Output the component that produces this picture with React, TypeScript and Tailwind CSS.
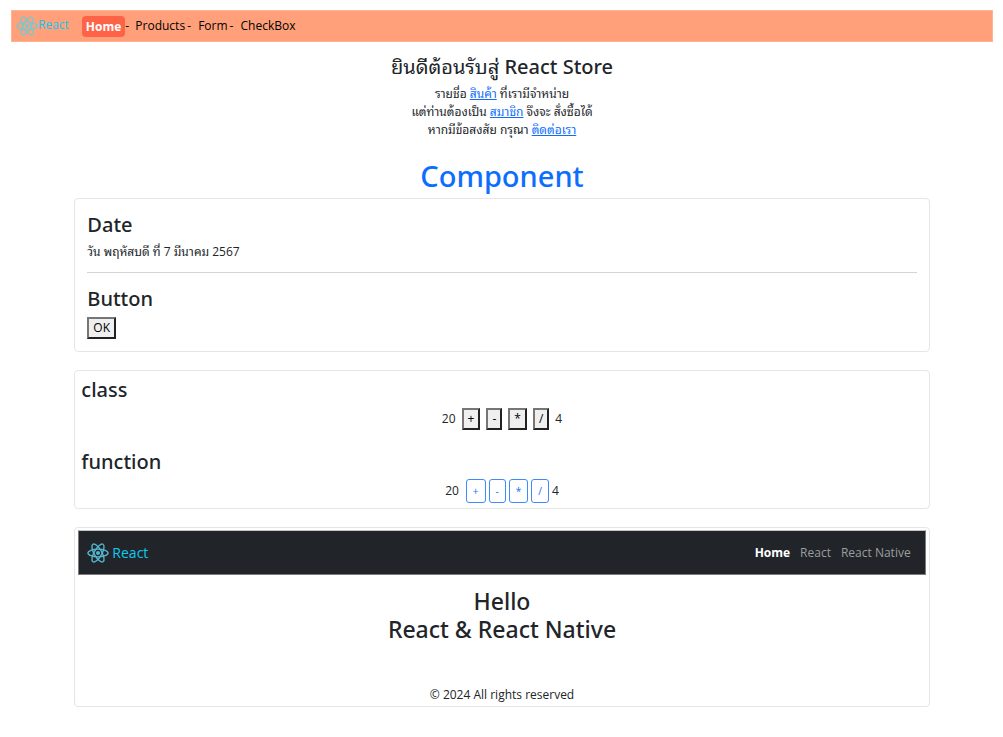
import React from "react";

function ReactLogo({ className }: { className: string }) {
  return (
    <svg viewBox="0 0 24 24" className={className} fill="none" stroke="currentColor" strokeWidth="1.5" aria-hidden="true">
      <circle cx="12" cy="12" r="2.2" fill="currentColor" stroke="none" />
      <ellipse cx="12" cy="12" rx="11" ry="4.2" />
      <ellipse cx="12" cy="12" rx="11" ry="4.2" transform="rotate(60 12 12)" />
      <ellipse cx="12" cy="12" rx="11" ry="4.2" transform="rotate(120 12 12)" />
    </svg>
  );
}

function TextLink({ children }: { children: React.ReactNode }) {
  return (
    <a href="#" className="text-[#0d6efd] underline">
      {children}
    </a>
  );
}

function TopNav() {
  return (
    <nav className="flex h-8 items-center border border-[#ffb38f] bg-[#ffa07a] pl-1">
      <a href="#" className="flex items-center text-[#0dcaf0]">
        <ReactLogo className="h-[22px] w-[22px] text-[#7fc6cc]" />
        <span className="pb-[2px]">React</span>
      </a>
      <div className="ml-[13px] flex items-center text-black">
        <a href="#" className="rounded bg-[#ff6347] px-1 leading-[21px] font-bold text-white">Home</a>
        <span className="mr-[6px] w-1">-</span>
        <a href="#">Products</a>
        <span className="mr-[7px] ml-[2px] w-1">-</span>
        <a href="#">Form</a>
        <span className="mr-[7px] ml-[2px] w-1">-</span>
        <a href="#">CheckBox</a>
      </div>
    </nav>
  );
}

function Heading({ children }: { children: React.ReactNode }) {
  return <h3 className="font-['Noto_Sans',sans-serif] text-[20px] leading-6 font-medium">{children}</h3>;
}

const operators = ["+", "-", "*", "/"];

export default function App() {
  return (
    <div className="bg-white pt-[10px] pr-[10px] pb-[30px] pl-[11px] font-['Open_Sans','Noto_Sans_Thai_Looped','Loma','Waree','Noto_Sans',sans-serif] text-[12px] leading-[18px] text-[#212529]">
      <TopNav />
      <main className="mx-auto w-[87.1%]">
        <header className="pt-[13px] text-center">
          <h1 className="mb-[6px] font-['Noto_Sans','Noto_Sans_Thai_Looped','Loma','Waree',sans-serif] text-[20px] leading-6">
            ยินดีต้อนรับสู่ <span className="font-medium">React Store</span>
          </h1>
          <p>รายชื่อ <TextLink>สินค้า</TextLink> ที่เรามีจำหน่าย</p>
          <p>แต่ท่านต้องเป็น <TextLink>สมาชิก</TextLink> จึงจะ สั่งซื้อได้</p>
          <p>หากมีข้อสงสัย กรุณา <TextLink>ติดต่อเรา</TextLink></p>
        </header>

        <h2 className="mt-[19px] mb-1 text-center font-['Noto_Sans',sans-serif] text-[29px] leading-9 font-medium text-[#0d6efd]">Component</h2>

        <section className="rounded border border-[#e5e6e8] px-3 pt-[14px] pb-3">
          <Heading>Date</Heading>
          <p className="mt-[6px]">วัน พฤหัสบดี ที่ 7 มีนาคม 2567</p>
          <hr className="mt-[11px] mb-[14px] border-[#d3d4d5]" />
          <Heading>Button</Heading>
          <button className="mt-[6px] block border-2 border-[#767676] border-r-[#212121] border-b-[#212121] bg-[#efefef] px-1 text-black">OK</button>
        </section>

        <section className="mt-[18px] rounded border border-[#e5e6e8] px-[6px] pt-[7px] pb-[5px]">
          <Heading>class</Heading>
          <div className="mt-[6px] flex items-center justify-center gap-[6px]">
            <span>20</span>
            {operators.map((op) => (
              <button key={op} className="border-2 border-[#767676] border-r-[#212121] border-b-[#212121] bg-[#efefef] px-1 text-black">{op}</button>
            ))}
            <span>4</span>
          </div>
          <div className="mt-5">
            <Heading>function</Heading>
          </div>
          <div className="mt-[5px] flex items-center justify-center gap-[3px]">
            <span className="mr-1">20</span>
            {operators.map((op) => (
              <button key={op} className="rounded-[3px] border border-[#3d8bfd] px-[6px] text-[10px] leading-[22px] text-[#0d6efd]">{op}</button>
            ))}
            <span>4</span>
          </div>
        </section>

        <section className="mt-[18px] rounded border border-[#e5e6e8] px-[3px] pt-[2px] pb-[2px]">
          <nav className="flex h-[45px] items-center justify-between border border-[#7a7c7e] border-t-[#c5c6c7] bg-[#212529] px-2">
            <a href="#" className="flex items-center gap-[3px] text-[14px] text-[#0dcaf0]">
              <ReactLogo className="h-[22px] w-[22px] text-[#54b6ce]" />
              React
            </a>
            <div className="flex gap-[10px] pr-[6px] text-[#9b9d9e]">
              <a href="#" className="font-bold text-white">Home</a>
              <a href="#">React</a>
              <a href="#">React Native</a>
            </div>
          </nav>
          <h2 className="mt-3 text-center font-['Noto_Sans',sans-serif] text-[23px] leading-7 font-medium">
            Hello
            <br />
            React &amp; React Native
          </h2>
          <footer className="mt-[43px] text-center">© 2024 All rights reserved</footer>
        </section>
      </main>
    </div>
  );
}
